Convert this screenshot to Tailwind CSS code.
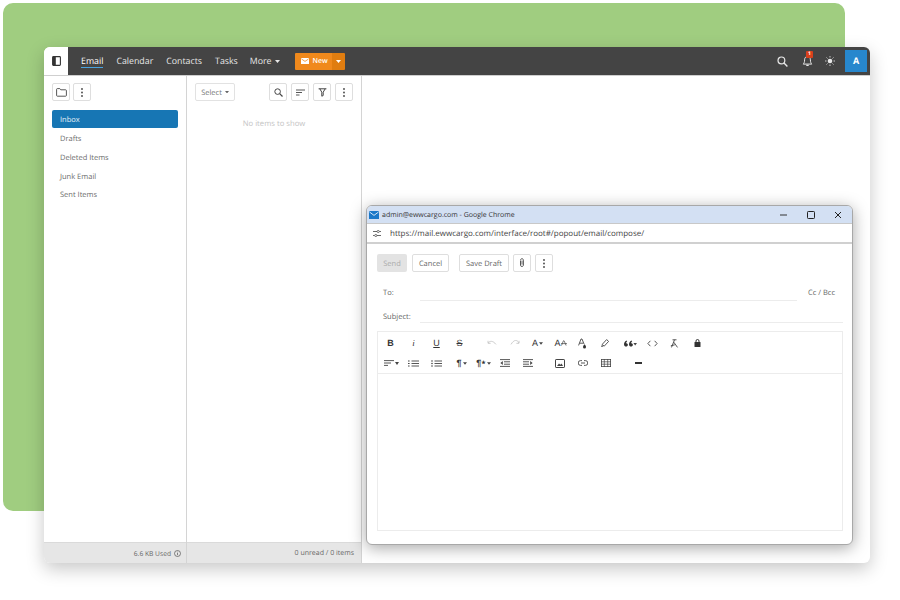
<!DOCTYPE html>
<html>
<head>
<meta charset="utf-8">
<script src="https://cdn.jsdelivr.net/npm/@tailwindcss/browser@4"></script>
</head>
<body class="bg-white">
<div class="relative w-[900px] h-[600px] overflow-hidden bg-white font-['Open_Sans','Noto_Sans',sans-serif] [text-rendering:geometricPrecision]">
  <div class="absolute left-[3px] top-[3px] w-[842px] h-[508px] rounded-[10px] bg-[#a0cd80]"></div>

  <!-- main window -->
  <div class="absolute left-[44px] top-[47px] w-[826px] h-[516px] rounded-[6px] bg-white shadow-[0_6px_18px_rgba(0,0,0,0.22)] flex flex-col overflow-hidden">
    <div class="h-[28px] flex shrink-0">
      <div class="w-[24px] bg-white flex items-center justify-center">
        <svg width="9" height="10" viewBox="0 0 9 10"><rect x="0.6" y="0.6" width="7.8" height="8.8" rx="0.8" fill="none" stroke="#333" stroke-width="1.1"/><rect x="1" y="1" width="2.8" height="8" fill="#333"/></svg>
      </div>
      <div class="flex-1 bg-[#444444] flex items-center pl-[13px] text-[8.8px] text-[#e8e8e8]">
        <span class="border-b border-[#4aa3df] h-[13px] leading-[13px] mt-[1px] text-white">Email</span>
        <span class="ml-[13px] pt-[2px]">Calendar</span>
        <span class="ml-[13px] pt-[2px]">Contacts</span>
        <span class="ml-[13px] pt-[2px]">Tasks</span>
        <span class="ml-[12px] flex items-center"><span class="pt-[2px]">More</span><svg class="ml-[3px]" width="5" height="3" viewBox="0 0 5 3"><path d="M0 0h5L2.500 3z" fill="#e8e8e8"/></svg></span>
        <div class="ml-[15px] h-[17px] flex rounded-[1px] overflow-hidden">
          <div class="w-[37px] pl-[6px] bg-[#f0891c] flex items-center gap-[4px] text-white text-[7px] font-semibold">
            <svg width="8" height="6" viewBox="0 0 8 6"><rect width="8" height="6" rx="0.600" fill="#fff"/><path d="M0.500 1L4 3.400 7.500 1" fill="none" stroke="#f0891c" stroke-width="0.800"/></svg><span class="pt-[3px]">New</span>
          </div>
          <div class="w-[13px] bg-[#e07d10] flex items-center justify-center"><svg width="5" height="3" viewBox="0 0 5 3"><path d="M0 0h5L2.500 3z" fill="#fff"/></svg></div>
        </div>
        <div class="ml-auto flex items-center">
          <svg width="11" height="11" viewBox="0 0 11 11"><circle cx="4.400" cy="4.400" r="3.400" fill="none" stroke="#e8e8e8" stroke-width="1.200"/><path d="M7 7l3.400 3.400" stroke="#e8e8e8" stroke-width="1.400"/></svg>
          <div class="relative ml-[14px] w-[11px] h-[12px]">
            <svg width="11" height="12" viewBox="0 0 11 12"><path d="M5.500 1.500C3.600 1.500 2.600 3 2.600 4.800c0 2.400-.6 3.500-1.400 4.300h8.600c-.8-.8-1.400-1.900-1.400-4.300 0-1.800-1-3.300-2.900-3.300z" fill="none" stroke="#e8e8e8" stroke-width="1"/><path d="M4.300 10.300h2.400" stroke="#e8e8e8" stroke-width="1.200"/></svg>
            <span class="absolute left-[4px] top-[-4px] w-[7px] h-[7px] rounded-[1px] bg-[#d8401c] text-white text-[5px] leading-[7px] text-center font-bold">1</span>
          </div>
          <svg class="ml-[12px]" width="10" height="10" viewBox="0 0 10 10"><circle cx="5" cy="5" r="2.300" fill="#e8e8e8"/><path d="M5 0v1.500M5 8.500V10M0 5h1.500M8.500 5H10M1.500 1.500l1 1M7.500 7.500l1 1M1.500 8.500l1-1M7.500 2.500l1-1" stroke="#e8e8e8" stroke-width="0.800"/></svg>
          <div class="ml-[10px] mr-[3px] w-[22px] h-[22px] bg-[#2787cd] text-white text-[9px] font-bold flex items-center justify-center">A</div>
        </div>
      </div>
    </div>
    <div class="h-[1px] bg-[#cfcfcf] shrink-0"></div>

    <div class="flex-1 flex min-h-0">
      <!-- folders -->
      <div class="w-[143px] border-r border-[#d4d4d4] flex flex-col shrink-0">
        <div class="flex-1 pl-[8px] pr-[8px] pt-[7px]">
          <div class="flex gap-[3px]">
            <div class="w-[18px] h-[18px] border border-[#dedede] rounded-[2px] flex items-center justify-center">
              <svg width="11" height="9" viewBox="0 0 11 9"><path d="M.6 1.300c0-.4.3-.7.7-.7h2.500l1 1.200h4.900c.4 0 .7.3.7.7v5c0 .4-.3.7-.7.7H1.300c-.4 0-.7-.3-.7-.7z" fill="none" stroke="#444" stroke-width="0.900"/></svg>
            </div>
            <div class="w-[18px] h-[18px] border border-[#dedede] rounded-[2px] flex items-center justify-center">
              <svg width="2" height="9" viewBox="0 0 2 9"><circle cx="1" cy="1" r="0.900" fill="#444"/><circle cx="1" cy="4.500" r="0.900" fill="#444"/><circle cx="1" cy="8" r="0.900" fill="#444"/></svg>
            </div>
          </div>
          <div class="mt-[9px] text-[7.5px] text-[#6b6b6b] flex flex-col">
            <div class="h-[18px] w-[126px] rounded-[2px] bg-[#1776b4] text-white/90 flex items-center pl-[8px] pt-[4px] mb-[1px]">Inbox</div>
            <div class="h-[18.7px] flex items-center pl-[8px] pt-[3px]">Drafts</div>
            <div class="h-[18.7px] flex items-center pl-[8px] pt-[4px]">Deleted Items</div>
            <div class="h-[18.7px] flex items-center pl-[8px] pt-[4px]">Junk Email</div>
            <div class="h-[18.7px] flex items-center pl-[8px] pt-[3px]">Sent Items</div>
          </div>
        </div>
        <div class="h-[21px] bg-[#e6e6e6] border-t border-[#dadada] flex items-center justify-end gap-[3px] pr-[5px] text-[6.7px] text-[#666]">
          <span class="pt-[3px]">6.6 KB Used</span>
          <svg width="7" height="7" viewBox="0 0 7 7"><circle cx="3.500" cy="3.500" r="3" fill="none" stroke="#555" stroke-width="0.700"/><path d="M3.500 3v2.200M3.500 1.700v.7" stroke="#555" stroke-width="0.700"/></svg>
        </div>
      </div>
      <!-- list -->
      <div class="w-[175px] border-r border-[#d4d4d4] flex flex-col shrink-0">
        <div class="flex-1 pt-[7px] pl-[8px] pr-[8px]">
          <div class="flex">
            <div class="w-[40px] h-[18px] border border-[#e2e2e2] rounded-[2px] flex items-center justify-center gap-[3px] text-[7.5px] text-[#777]"><span class="pt-[3px]">Select</span><svg width="4" height="2.500" viewBox="0 0 5 3"><path d="M0 0h5L2.500 3z" fill="#666"/></svg></div>
            <div class="ml-auto flex gap-[4px]">
              <div class="w-[18px] h-[18px] border border-[#dedede] rounded-[2px] flex items-center justify-center"><svg width="9" height="9" viewBox="0 0 9 9"><circle cx="3.600" cy="3.600" r="2.800" fill="none" stroke="#444" stroke-width="1"/><path d="M5.700 5.700l2.800 2.800" stroke="#444" stroke-width="1.200"/></svg></div>
              <div class="w-[18px] h-[18px] border border-[#dedede] rounded-[2px] flex items-center justify-center"><svg width="9" height="7" viewBox="0 0 9 7"><path d="M0 1h9M0 3.500h6M0 6h3.500" stroke="#444" stroke-width="0.900"/></svg></div>
              <div class="w-[18px] h-[18px] border border-[#dedede] rounded-[2px] flex items-center justify-center"><svg width="9" height="9" viewBox="0 0 9 9"><path d="M.6.8h7.800M1.800 .8l2 3.400v4l1.400-.7V4.200l2-3.400" fill="none" stroke="#444" stroke-width="1"/></svg></div>
              <div class="w-[18px] h-[18px] border border-[#dedede] rounded-[2px] flex items-center justify-center"><svg width="2" height="9" viewBox="0 0 2 9"><circle cx="1" cy="1" r="0.900" fill="#444"/><circle cx="1" cy="4.500" r="0.900" fill="#444"/><circle cx="1" cy="8" r="0.900" fill="#444"/></svg></div>
            </div>
          </div>
          <div class="mt-[18px] text-center text-[7.7px] text-[#c4c4c4]">No items to show</div>
        </div>
        <div class="h-[21px] bg-[#e6e6e6] border-t border-[#dadada] flex items-center justify-end pr-[7px] pt-[3px] text-[7px] text-[#666]">0 unread / 0 items</div>
      </div>
      <div class="flex-1"></div>
    </div>
  </div>

  <!-- popup -->
  <div class="absolute left-[366px] top-[205px] w-[487px] h-[340px] rounded-[6px] bg-white border border-[#a8a8a8] shadow-[0_3px_16px_rgba(0,0,0,0.35)] flex flex-col overflow-hidden">
    <div class="h-[18px] bg-[#d3e0f3] flex items-center pl-[2px] shrink-0 border-b border-[#c8c8c8]">
      <svg width="10" height="8" viewBox="0 0 10 8"><rect width="10" height="8" rx="0.600" fill="#1b78c8"/><path d="M.5 1L5 4.400 9.500 1" fill="none" stroke="#fff" stroke-width="0.800"/></svg>
      <span class="ml-[3px] pt-[4px] text-[7px] text-[#333]">admin@ewwcargo.com - Google Chrome</span>
      <div class="ml-auto flex items-center">
        <svg width="8" height="8" viewBox="0 0 8 8"><path d="M0 4h7" stroke="#333" stroke-width="1"/></svg>
        <svg class="ml-[19px]" width="8" height="8" viewBox="0 0 8 8"><rect x="0.500" y="0.500" width="7" height="7" rx="0.800" fill="none" stroke="#222" stroke-width="1"/></svg>
        <svg class="ml-[19px] mr-[10px]" width="8" height="8" viewBox="0 0 8 8"><path d="M1 1l6 6M7 1L1 7" stroke="#222" stroke-width="1"/></svg>
      </div>
    </div>
    <div class="h-[20px] flex items-center border-b-2 border-[#d0d0d0] pl-[6px] shrink-0">
      <svg width="8" height="7" viewBox="0 0 8 7"><path d="M0 1.500h4M6.500 1.500H8M0 5.500h1.500M4 5.500h4" stroke="#444" stroke-width="0.800"/><circle cx="5.200" cy="1.500" r="1.100" fill="none" stroke="#444" stroke-width="0.700"/><circle cx="2.800" cy="5.500" r="1.100" fill="none" stroke="#444" stroke-width="0.700"/></svg>
      <span class="ml-[9px] pt-[2px] text-[8px] text-[#444]">https://mail.ewwcargo.com/interface/root#/popout/email/compose/</span>
    </div>
    <div class="flex-1 flex flex-col pl-[10px] pr-[9px] pt-[10px] pb-[13px] min-h-0">
      <div class="flex items-center h-[18px] text-[7.5px] text-[#666]">
        <div class="w-[30px] h-[18px] pt-[4px] bg-[#e3e3e3] rounded-[2px] flex items-center justify-center text-[#aaa]">Send</div>
        <div class="ml-[5px] w-[37px] h-[18px] pt-[4px] border border-[#dedede] rounded-[2px] flex items-center justify-center">Cancel</div>
        <div class="ml-[10px] w-[50px] h-[18px] pt-[4px] border border-[#dedede] rounded-[2px] flex items-center justify-center">Save Draft</div>
        <div class="ml-[4px] w-[18px] h-[18px] border border-[#dedede] rounded-[2px] flex items-center justify-center">
          <svg width="6" height="10" viewBox="0 0 6 10"><path d="M1.500 2.600v4.600c0 .8.6 1.300 1.400 1.300s1.500-.5 1.500-1.300V2.200C4.400 1.300 3.800.7 3 .7S1.500 1.300 1.500 2.200" fill="none" stroke="#444" stroke-width="0.900"/><path d="M3 2.600v4" stroke="#444" stroke-width="0.800"/></svg>
        </div>
        <div class="ml-[4px] w-[18px] h-[18px] border border-[#dedede] rounded-[2px] flex items-center justify-center"><svg width="2" height="9" viewBox="0 0 2 9"><circle cx="1" cy="1" r="0.900" fill="#444"/><circle cx="1" cy="4.500" r="0.900" fill="#444"/><circle cx="1" cy="8" r="0.900" fill="#444"/></svg></div>
      </div>
      <div class="mt-[11px] flex items-center h-[18px] text-[7.5px] text-[#666]">
        <span class="w-[43px] pl-[6px] pt-[3px]">To:</span>
        <div class="w-[377px] self-stretch border-b border-[#ececec]"></div>
        <span class="ml-[11px] pt-[3px]">Cc / Bcc</span>
      </div>
      <div class="mt-[8px] flex items-center h-[14px] text-[7.5px] text-[#666]">
        <span class="w-[43px] pl-[6px] pt-[3px]">Subject:</span>
        <div class="flex-1 self-stretch border-b border-[#ececec]"></div>
      </div>
      <!-- editor -->
      <div class="mt-[8px] flex-1 border border-[#ececec] flex flex-col min-h-0">
        <div class="h-[42px] pt-[1px] border-b border-[#ececec] shrink-0 text-[#333] font-['Liberation_Sans']">
          <div class="flex items-center h-[20px] text-[9px] leading-none">
            <div class="ml-[1px] w-[23px] flex justify-center font-bold">B</div>
            <div class="w-[23px] flex justify-center italic font-['Liberation_Serif']">i</div>
            <div class="w-[23px] flex justify-center underline">U</div>
            <div class="w-[23px] flex justify-center line-through">S</div>
            <div class="ml-[9px] w-[23px] flex justify-center"><svg width="10" height="6" viewBox="0 0 10 6"><path d="M1 3c2-2.400 5-2.400 8 1.400M1 .8V3.300h2.600" fill="none" stroke="#c6c6c6" stroke-width="0.900"/></svg></div>
            <div class="w-[23px] flex justify-center"><svg width="10" height="6" viewBox="0 0 10 6"><path d="M9 3C7-.6 4-.6 1 4.400M9 .8V3.300H6.400" fill="none" stroke="#c6c6c6" stroke-width="0.900"/></svg></div>
            <div class="w-[23px] flex justify-center items-center">A<svg class="ml-[1px]" width="4" height="3" viewBox="0 0 5 3"><path d="M0 0h5L2.500 3z" fill="#444"/></svg></div>
            <div class="w-[23px] flex justify-center items-center">A<svg width="6" height="6" viewBox="0 0 6 6"><path d="M.5 5.500L2.400.8h.7l2 4.700M0 3.600h6" fill="none" stroke="#444" stroke-width="0.700"/></svg></div>
            <div class="w-[21px] flex justify-center"><svg width="9" height="11" viewBox="0 0 9 11"><path d="M.6 7.400L3 1h1l2 5M1.600 5.200h3.400" fill="none" stroke="#444" stroke-width="0.900"/><path d="M6.500 6.200c1 1.200 1.500 2 1.500 2.800a1.500 1.500 0 0 1-3 0c0-.8.5-1.600 1.500-2.800z" fill="#333"/></svg></div>
            <div class="w-[24px] flex justify-center"><svg width="10" height="10" viewBox="0 0 10 10"><path d="M2.200 6.400L6.600 1.600l2 1.800-4.400 4.800z" fill="none" stroke="#444" stroke-width="0.900"/><path d="M2 6.800L1 9l2.300-.6z" fill="#444"/></svg></div>
            <div class="ml-[1px] w-[24px] flex justify-center items-center"><svg width="13" height="7" viewBox="0 0 13 7"><path d="M2.400 .4C.8 1.400 0 2.800 0 4.200 0 5.800 1 6.600 2 6.600s1.900-.7 1.900-1.800S3.100 3.200 2 3.200C2.300 2.400 2.700 1.800 3.200 1.300zM7.400 .4C5.800 1.400 5 2.800 5 4.200 5 5.800 6 6.600 7 6.600s1.900-.7 1.900-1.800S8.100 3.200 7 3.200C7.300 2.400 7.700 1.800 8.200 1.300z" fill="#333"/><path d="M9.400 3H13l-1.800 2.400z" fill="#444"/></svg></div>
            <div class="w-[20px] flex justify-center"><svg width="11" height="7" viewBox="0 0 11 7"><path d="M3.400.8L.9 3.500l2.500 2.700M7.600.8l2.500 2.700-2.500 2.700" fill="none" stroke="#444" stroke-width="0.900"/></svg></div>
            <div class="w-[24px] flex justify-center"><svg width="9" height="9" viewBox="0 0 9 9"><path d="M2.500.8h4M4.500.8L1.500 8.400M3.800 3.200L7.500 8.400M.8 6.800l4-1" fill="none" stroke="#444" stroke-width="0.900"/></svg></div>
            <div class="w-[22px] flex justify-center"><svg width="7" height="8" viewBox="0 0 7 8"><rect x="0.500" y="3" width="6" height="5" rx="0.500" fill="#333"/><path d="M2 3.400V2a1.500 1.500 0 0 1 3 0v1.400" fill="none" stroke="#333"/></svg></div>
          </div>
          <div class="flex items-center h-[20px] text-[9px] leading-none">
            <div class="ml-[3px] w-[21px] flex justify-center items-center"><svg width="15" height="6" viewBox="0 0 15 6"><path d="M0 .6h10M0 3h7M0 5.400h4" stroke="#444" stroke-width="0.900"/><path d="M11 2h4l-2 3z" fill="#444"/></svg></div>
            <div class="w-[23px] flex justify-center"><svg width="11" height="7" viewBox="0 0 11 7"><path d="M3.500 1h7.500M3.500 3.500h7.500M3.500 6h7.500" stroke="#444" stroke-width="0.900"/><path d="M0 1h1.600M0 3.500h1.600M0 6h1.600" stroke="#444" stroke-width="1"/></svg></div>
            <div class="w-[23px] flex justify-center"><svg width="11" height="7" viewBox="0 0 11 7"><path d="M3.500 1h7.500M3.500 3.500h7.500M3.500 6h7.500" stroke="#444" stroke-width="0.900"/><circle cx="1" cy="1" r="0.800" fill="#444"/><circle cx="1" cy="3.500" r="0.800" fill="#444"/><circle cx="1" cy="6" r="0.800" fill="#444"/></svg></div>
            <div class="w-[25px] pl-[2px] flex justify-center items-center font-bold">¶<svg class="ml-[1px]" width="4" height="3" viewBox="0 0 5 3"><path d="M0 0h5L2.500 3z" fill="#444"/></svg></div>
            <div class="w-[21px] flex justify-center items-center font-bold">¶<span class="text-[5px]">★</span><svg class="ml-[1px]" width="4" height="3" viewBox="0 0 5 3"><path d="M0 0h5L2.500 3z" fill="#444"/></svg></div>
            <div class="w-[22px] flex justify-center"><svg width="10" height="8" viewBox="0 0 10 8"><path d="M0 .6h10M4 2.800h6M4 5.200h6M0 7.400h10" stroke="#444" stroke-width="0.900"/><path d="M2.800 2L.4 4l2.400 2z" fill="#444"/></svg></div>
            <div class="w-[23px] flex justify-center"><svg width="10" height="8" viewBox="0 0 10 8"><path d="M0 .6h10M0 2.800h6M0 5.200h6M0 7.400h10" stroke="#444" stroke-width="0.900"/><path d="M7.200 2l2.400 2-2.400 2z" fill="#444"/></svg></div>
            <div class="ml-[9px] w-[23px] flex justify-center"><svg width="10" height="9" viewBox="0 0 10 9"><rect x="0.500" y="0.500" width="9" height="8" rx="0.600" fill="none" stroke="#444"/><path d="M2 7l2-2.600 1.400 1.400L6.500 4.600 8 7z" fill="#444"/></svg></div>
            <div class="w-[23px] flex justify-center"><svg width="10" height="6" viewBox="0 0 10 6"><path d="M4 .6H2.600a2.400 2.400 0 0 0 0 4.800H4M6 .6h1.400a2.400 2.400 0 0 1 0 4.800H6M3 3h4" fill="none" stroke="#444" stroke-width="0.900"/></svg></div>
            <div class="w-[23px] flex justify-center"><svg width="10" height="8" viewBox="0 0 10 8"><rect x="0.400" y="0.400" width="9.200" height="7.200" fill="none" stroke="#444" stroke-width="0.800"/><path d="M0 2.800h10M0 5.200h10M3.300 0v8M6.700 0v8" stroke="#444" stroke-width="0.700"/></svg></div>
            <div class="ml-[18px] w-[7px] h-[2px] bg-[#333]"></div>
          </div>
        </div>
        <div class="flex-1"></div>
      </div>
    </div>
  </div>
</div>
</body>
</html>
